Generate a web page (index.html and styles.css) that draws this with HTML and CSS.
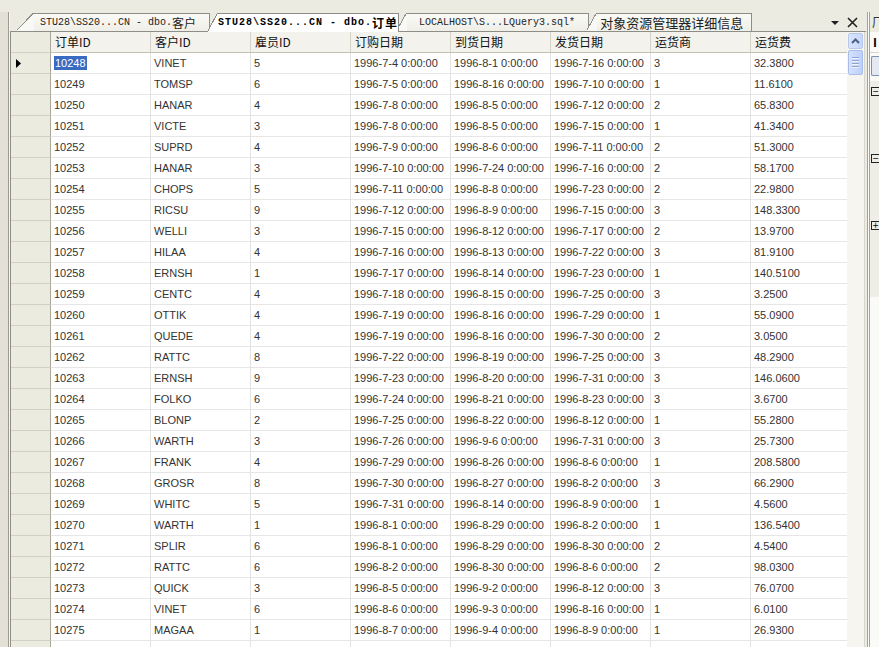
FILE: index.html
```html
<!DOCTYPE html>
<html lang="zh">
<head>
  <meta charset="UTF-8">
  <title>dbo.订单</title>
  <link rel="stylesheet" href="styles.css">
</head>
<body>
  <div class="top-strip"></div>

  <div class="workspace">
    <div class="left-pane"></div>

    <div class="doc">
      <!-- document tabs -->
      <div class="tabbar">
        <div class="tab first">STU28\SS20...CN - dbo.<span class="cjk">客户</span></div>
        <div class="tab active">STU28\SS20...CN - dbo.<span class="cjk">订单</span></div>
        <div class="tab third">LOCALHOST\S...LQuery3.sql*</div>
        <div class="tab fourth"><span class="cjk">对象资源管理器详细信息</span></div>
        <div class="tab-tools">
          <span class="drop-arrow"></span>
          <svg class="close-x" width="11" height="11" viewBox="0 0 11 11">
            <path d="M1 1 L10 10 M10 1 L1 10" stroke="#222" stroke-width="1.6"/>
          </svg>
        </div>
      </div>

      <div class="grid-area">
        <div class="grid">
          <div class="row head">
            <div class="cell rh"></div>
            <div class="cell">订单ID</div>
            <div class="cell">客户ID</div>
            <div class="cell">雇员ID</div>
            <div class="cell">订购日期</div>
            <div class="cell">到货日期</div>
            <div class="cell">发货日期</div>
            <div class="cell">运货商</div>
            <div class="cell">运货费</div>
          </div>

          <div class="row">
            <div class="cell rh"><svg width="6" height="9" viewBox="0 0 6 9"><path d="M0 0 L5 4.5 L0 9 Z" fill="#000"/></svg></div>
            <div class="cell"><span class="sel">10248</span></div><div class="cell">VINET</div><div class="cell">5</div>
            <div class="cell">1996-7-4 0:00:00</div><div class="cell">1996-8-1 0:00:00</div><div class="cell">1996-7-16 0:00:00</div>
            <div class="cell">3</div><div class="cell">32.3800</div>
          </div>
          <div class="row">
            <div class="cell rh"></div>
            <div class="cell">10249</div><div class="cell">TOMSP</div><div class="cell">6</div>
            <div class="cell">1996-7-5 0:00:00</div><div class="cell">1996-8-16 0:00:00</div><div class="cell">1996-7-10 0:00:00</div>
            <div class="cell">1</div><div class="cell">11.6100</div>
          </div>
          <div class="row">
            <div class="cell rh"></div>
            <div class="cell">10250</div><div class="cell">HANAR</div><div class="cell">4</div>
            <div class="cell">1996-7-8 0:00:00</div><div class="cell">1996-8-5 0:00:00</div><div class="cell">1996-7-12 0:00:00</div>
            <div class="cell">2</div><div class="cell">65.8300</div>
          </div>
          <div class="row">
            <div class="cell rh"></div>
            <div class="cell">10251</div><div class="cell">VICTE</div><div class="cell">3</div>
            <div class="cell">1996-7-8 0:00:00</div><div class="cell">1996-8-5 0:00:00</div><div class="cell">1996-7-15 0:00:00</div>
            <div class="cell">1</div><div class="cell">41.3400</div>
          </div>
          <div class="row">
            <div class="cell rh"></div>
            <div class="cell">10252</div><div class="cell">SUPRD</div><div class="cell">4</div>
            <div class="cell">1996-7-9 0:00:00</div><div class="cell">1996-8-6 0:00:00</div><div class="cell">1996-7-11 0:00:00</div>
            <div class="cell">2</div><div class="cell">51.3000</div>
          </div>
          <div class="row">
            <div class="cell rh"></div>
            <div class="cell">10253</div><div class="cell">HANAR</div><div class="cell">3</div>
            <div class="cell">1996-7-10 0:00:00</div><div class="cell">1996-7-24 0:00:00</div><div class="cell">1996-7-16 0:00:00</div>
            <div class="cell">2</div><div class="cell">58.1700</div>
          </div>
          <div class="row">
            <div class="cell rh"></div>
            <div class="cell">10254</div><div class="cell">CHOPS</div><div class="cell">5</div>
            <div class="cell">1996-7-11 0:00:00</div><div class="cell">1996-8-8 0:00:00</div><div class="cell">1996-7-23 0:00:00</div>
            <div class="cell">2</div><div class="cell">22.9800</div>
          </div>
          <div class="row">
            <div class="cell rh"></div>
            <div class="cell">10255</div><div class="cell">RICSU</div><div class="cell">9</div>
            <div class="cell">1996-7-12 0:00:00</div><div class="cell">1996-8-9 0:00:00</div><div class="cell">1996-7-15 0:00:00</div>
            <div class="cell">3</div><div class="cell">148.3300</div>
          </div>
          <div class="row">
            <div class="cell rh"></div>
            <div class="cell">10256</div><div class="cell">WELLI</div><div class="cell">3</div>
            <div class="cell">1996-7-15 0:00:00</div><div class="cell">1996-8-12 0:00:00</div><div class="cell">1996-7-17 0:00:00</div>
            <div class="cell">2</div><div class="cell">13.9700</div>
          </div>
          <div class="row">
            <div class="cell rh"></div>
            <div class="cell">10257</div><div class="cell">HILAA</div><div class="cell">4</div>
            <div class="cell">1996-7-16 0:00:00</div><div class="cell">1996-8-13 0:00:00</div><div class="cell">1996-7-22 0:00:00</div>
            <div class="cell">3</div><div class="cell">81.9100</div>
          </div>
          <div class="row">
            <div class="cell rh"></div>
            <div class="cell">10258</div><div class="cell">ERNSH</div><div class="cell">1</div>
            <div class="cell">1996-7-17 0:00:00</div><div class="cell">1996-8-14 0:00:00</div><div class="cell">1996-7-23 0:00:00</div>
            <div class="cell">1</div><div class="cell">140.5100</div>
          </div>
          <div class="row">
            <div class="cell rh"></div>
            <div class="cell">10259</div><div class="cell">CENTC</div><div class="cell">4</div>
            <div class="cell">1996-7-18 0:00:00</div><div class="cell">1996-8-15 0:00:00</div><div class="cell">1996-7-25 0:00:00</div>
            <div class="cell">3</div><div class="cell">3.2500</div>
          </div>
          <div class="row">
            <div class="cell rh"></div>
            <div class="cell">10260</div><div class="cell">OTTIK</div><div class="cell">4</div>
            <div class="cell">1996-7-19 0:00:00</div><div class="cell">1996-8-16 0:00:00</div><div class="cell">1996-7-29 0:00:00</div>
            <div class="cell">1</div><div class="cell">55.0900</div>
          </div>
          <div class="row">
            <div class="cell rh"></div>
            <div class="cell">10261</div><div class="cell">QUEDE</div><div class="cell">4</div>
            <div class="cell">1996-7-19 0:00:00</div><div class="cell">1996-8-16 0:00:00</div><div class="cell">1996-7-30 0:00:00</div>
            <div class="cell">2</div><div class="cell">3.0500</div>
          </div>
          <div class="row">
            <div class="cell rh"></div>
            <div class="cell">10262</div><div class="cell">RATTC</div><div class="cell">8</div>
            <div class="cell">1996-7-22 0:00:00</div><div class="cell">1996-8-19 0:00:00</div><div class="cell">1996-7-25 0:00:00</div>
            <div class="cell">3</div><div class="cell">48.2900</div>
          </div>
          <div class="row">
            <div class="cell rh"></div>
            <div class="cell">10263</div><div class="cell">ERNSH</div><div class="cell">9</div>
            <div class="cell">1996-7-23 0:00:00</div><div class="cell">1996-8-20 0:00:00</div><div class="cell">1996-7-31 0:00:00</div>
            <div class="cell">3</div><div class="cell">146.0600</div>
          </div>
          <div class="row">
            <div class="cell rh"></div>
            <div class="cell">10264</div><div class="cell">FOLKO</div><div class="cell">6</div>
            <div class="cell">1996-7-24 0:00:00</div><div class="cell">1996-8-21 0:00:00</div><div class="cell">1996-8-23 0:00:00</div>
            <div class="cell">3</div><div class="cell">3.6700</div>
          </div>
          <div class="row">
            <div class="cell rh"></div>
            <div class="cell">10265</div><div class="cell">BLONP</div><div class="cell">2</div>
            <div class="cell">1996-7-25 0:00:00</div><div class="cell">1996-8-22 0:00:00</div><div class="cell">1996-8-12 0:00:00</div>
            <div class="cell">1</div><div class="cell">55.2800</div>
          </div>
          <div class="row">
            <div class="cell rh"></div>
            <div class="cell">10266</div><div class="cell">WARTH</div><div class="cell">3</div>
            <div class="cell">1996-7-26 0:00:00</div><div class="cell">1996-9-6 0:00:00</div><div class="cell">1996-7-31 0:00:00</div>
            <div class="cell">3</div><div class="cell">25.7300</div>
          </div>
          <div class="row">
            <div class="cell rh"></div>
            <div class="cell">10267</div><div class="cell">FRANK</div><div class="cell">4</div>
            <div class="cell">1996-7-29 0:00:00</div><div class="cell">1996-8-26 0:00:00</div><div class="cell">1996-8-6 0:00:00</div>
            <div class="cell">1</div><div class="cell">208.5800</div>
          </div>
          <div class="row">
            <div class="cell rh"></div>
            <div class="cell">10268</div><div class="cell">GROSR</div><div class="cell">8</div>
            <div class="cell">1996-7-30 0:00:00</div><div class="cell">1996-8-27 0:00:00</div><div class="cell">1996-8-2 0:00:00</div>
            <div class="cell">3</div><div class="cell">66.2900</div>
          </div>
          <div class="row">
            <div class="cell rh"></div>
            <div class="cell">10269</div><div class="cell">WHITC</div><div class="cell">5</div>
            <div class="cell">1996-7-31 0:00:00</div><div class="cell">1996-8-14 0:00:00</div><div class="cell">1996-8-9 0:00:00</div>
            <div class="cell">1</div><div class="cell">4.5600</div>
          </div>
          <div class="row">
            <div class="cell rh"></div>
            <div class="cell">10270</div><div class="cell">WARTH</div><div class="cell">1</div>
            <div class="cell">1996-8-1 0:00:00</div><div class="cell">1996-8-29 0:00:00</div><div class="cell">1996-8-2 0:00:00</div>
            <div class="cell">1</div><div class="cell">136.5400</div>
          </div>
          <div class="row">
            <div class="cell rh"></div>
            <div class="cell">10271</div><div class="cell">SPLIR</div><div class="cell">6</div>
            <div class="cell">1996-8-1 0:00:00</div><div class="cell">1996-8-29 0:00:00</div><div class="cell">1996-8-30 0:00:00</div>
            <div class="cell">2</div><div class="cell">4.5400</div>
          </div>
          <div class="row">
            <div class="cell rh"></div>
            <div class="cell">10272</div><div class="cell">RATTC</div><div class="cell">6</div>
            <div class="cell">1996-8-2 0:00:00</div><div class="cell">1996-8-30 0:00:00</div><div class="cell">1996-8-6 0:00:00</div>
            <div class="cell">2</div><div class="cell">98.0300</div>
          </div>
          <div class="row">
            <div class="cell rh"></div>
            <div class="cell">10273</div><div class="cell">QUICK</div><div class="cell">3</div>
            <div class="cell">1996-8-5 0:00:00</div><div class="cell">1996-9-2 0:00:00</div><div class="cell">1996-8-12 0:00:00</div>
            <div class="cell">3</div><div class="cell">76.0700</div>
          </div>
          <div class="row">
            <div class="cell rh"></div>
            <div class="cell">10274</div><div class="cell">VINET</div><div class="cell">6</div>
            <div class="cell">1996-8-6 0:00:00</div><div class="cell">1996-9-3 0:00:00</div><div class="cell">1996-8-16 0:00:00</div>
            <div class="cell">1</div><div class="cell">6.0100</div>
          </div>
          <div class="row">
            <div class="cell rh"></div>
            <div class="cell">10275</div><div class="cell">MAGAA</div><div class="cell">1</div>
            <div class="cell">1996-8-7 0:00:00</div><div class="cell">1996-9-4 0:00:00</div><div class="cell">1996-8-9 0:00:00</div>
            <div class="cell">1</div><div class="cell">26.9300</div>
          </div>
          <div class="row">
            <div class="cell rh"></div>
            <div class="cell"></div><div class="cell"></div><div class="cell"></div>
            <div class="cell"></div><div class="cell"></div><div class="cell"></div>
            <div class="cell"></div><div class="cell"></div>
          </div>
        </div>

        <!-- vertical scrollbar -->
        <div class="vscroll">
          <div class="sb-btn">
            <svg width="9" height="6" viewBox="0 0 9 6"><path d="M1 5 L4.5 1.5 L8 5" fill="none" stroke="#4d6185" stroke-width="2"/></svg>
          </div>
          <div class="sb-thumb">
            <span></span><span></span><span></span><span></span>
          </div>
        </div>
      </div>
    </div>

    <div class="right-pane">
      <div class="rp-head">厂</div>
      <div class="rp-bar">I</div>
      <div class="rp-icons"><span></span></div>
      <div class="rp-tree">
        <span class="box">−</span>
        <span class="box">−</span>
        <span class="box">+</span>
      </div>
    </div>
  </div>
</body>
</html>
```

FILE: styles.css
```css
body{
  margin: 0;
  width: 879px;
  height: 647px;
  overflow: hidden;
  background-color: #ecebe2;
  font-family: "Liberation Sans", Arial, sans-serif;
}

.top-strip{
  height: 12px;
  background-color: #ecebe2;
}

.workspace{
  display: flex;
  height: 635px;
}

.left-pane{
  flex: none;
  width: 8px;
  background-color: #e3e1d6;
  border-right: 1px solid #9d9b90;
}

/* ---------- document ---------- */

.doc{
  flex: none;
  width: 856px;
  display: flex;
  flex-direction: column;
  border-left: 1px solid #f7f6f0;
}

.tabbar{
  height: 19px;
  display: flex;
  align-items: flex-end;
  padding-left: 15px;
  background-color: #ecebe2;
  border-bottom: 1px solid #8e8e88;
  font-family: "Liberation Mono", "DejaVu Sans Mono", monospace;
  font-size: 10px;
  color: #222;
}

.cjk{
  font-family: "Noto Sans CJK SC", sans-serif;
  font-size: 12px;
}

.tab{
  height: 18px;
  display: flex;
  align-items: center;
  box-sizing: border-box;
  margin-left: -2px;
  padding-left: 20px;
  white-space: nowrap;
  border-right: 1px solid #8e8e88;
  background:
    linear-gradient(to bottom right, transparent calc(50% - 1px), #8e8e88 calc(50% - 1px), #8e8e88 50%, #f8f8f4 50%) 0 0 / 10px 100% no-repeat,
    linear-gradient(#8e8e88, #8e8e88) 10px 0 / 100% 1px no-repeat,
    linear-gradient(#fbfbf8, #efeee7) 10px 0 / 100% 100% no-repeat;
}

.tab.first{
  margin-left: -8px;
  padding-left: 23px;
  padding-right: 13px;
  background:
    linear-gradient(to bottom right, transparent calc(50% - 1px), #8e8e88 calc(50% - 1px), #8e8e88 50%, #f8f8f4 50%) 0 0 / 17px 100% no-repeat,
    linear-gradient(#8e8e88, #8e8e88) 17px 0 / 100% 1px no-repeat,
    linear-gradient(#fbfbf8, #efeee7) 17px 0 / 100% 100% no-repeat;
}

.tab.active{
  z-index: 2;
  height: 19px;
  margin-bottom: -1px;
  padding-left: 10px;
  padding-right: 0;
  font-weight: bold;
  letter-spacing: 1px;
  color: #000;
  background:
    linear-gradient(to bottom right, transparent calc(50% - 1px), #8e8e88 calc(50% - 1px), #8e8e88 50%, #fff 50%) 0 0 / 10px 100% no-repeat,
    linear-gradient(#8e8e88, #8e8e88) 10px 0 / 100% 1px no-repeat,
    linear-gradient(#fff, #fff) 10px 0 / 100% 100% no-repeat;
}

.tab.third{
  padding-left: 22px;
  padding-right: 13px;
}

.tab.fourth{
  padding-left: 13px;
  padding-right: 8px;
}

.tab.fourth .cjk{
  font-size: 13px;
}

.tab-tools{
  margin-left: auto;
  height: 18px;
  display: flex;
  align-items: center;
  gap: 8px;
  padding-right: 8px;
}

.drop-arrow{
  width: 0;
  height: 0;
  border-left: 4px solid transparent;
  border-right: 4px solid transparent;
  border-top: 4px solid #222;
  margin-top: 2px;
}

/* ---------- grid ---------- */

.grid-area{
  flex: 1;
  display: flex;
  overflow: hidden;
  border-left: 1px solid #8e8e88;
}

.grid{
  flex: none;
  width: 836px;
  background-color: #fff;
  font-size: 11px;
  color: #333;
}

.row{
  display: grid;
  grid-template-columns: 40px repeat(7, 100px) 96px;
  height: 21px;
}

.cell{
  box-sizing: border-box;
  border-right: 1px solid #e2e2e2;
  border-bottom: 1px solid #e6e6e6;
  padding-left: 3px;
  line-height: 20px;
  white-space: nowrap;
  overflow: hidden;
}

.row .cell:last-child{
  border-right: none;
}

.head .cell{
  background-color: #f3f2ec;
  border-right: 1px solid #d5d3c8;
  border-bottom: 1px solid #c4c1b2;
  font-family: "Noto Sans CJK SC", sans-serif;
  font-size: 12px;
  color: #111;
  padding-left: 4px;
}

.cell.rh{
  background-color: #ecebdf;
  border-right: 1px solid #a9a79c;
  border-bottom: 1px solid #d2d0c4;
  display: flex;
  align-items: center;
  padding-left: 5px;
}

.head .cell.rh{
  background-color: #ecebdf;
  border-right: 1px solid #a9a79c;
}

.sel{
  background-color: #3a6bc3;
  color: #fff;
  padding: 1px 1px;
}

/* ---------- scrollbar ---------- */

.vscroll{
  flex: none;
  width: 17px;
  background-color: #f6f5f0;
  border-right: 1px solid #d8d6cc;
  display: flex;
  flex-direction: column;
  align-items: center;
  padding-top: 1px;
  gap: 1px;
}

.sb-btn{
  width: 15px;
  height: 16px;
  box-sizing: border-box;
  border: 1px solid #b7c8f0;
  border-radius: 2px;
  background: linear-gradient(to right, #dbe6fd, #c6d6fc);
  display: flex;
  align-items: center;
  justify-content: center;
}

.sb-thumb{
  width: 15px;
  height: 25px;
  box-sizing: border-box;
  border: 1px solid #a9bdec;
  border-radius: 2px;
  background: linear-gradient(to right, #d6e2fd, #bdd0fa);
  display: flex;
  flex-direction: column;
  align-items: center;
  justify-content: center;
  gap: 1px;
}

.sb-thumb span{
  width: 7px;
  height: 1px;
  background-color: #8aa3d8;
  border-bottom: 1px solid #eef3ff;
}

/* ---------- right pane ---------- */

.right-pane{
  flex: 1;
  min-width: 0;
  overflow: hidden;
  display: flex;
  flex-direction: column;
  border-left: 3px double #a4a29a;
  margin-left: 1px;
  background-color: #fafaf7;
  font-family: "Noto Sans CJK SC", sans-serif;
  font-size: 12px;
}

.rp-head{
  height: 20px;
  line-height: 20px;
  padding-left: 2px;
  background-color: #ecebe2;
  color: #333;
}

.rp-bar{
  height: 20px;
  line-height: 20px;
  padding-left: 3px;
  font-weight: bold;
  color: #000;
  border-bottom: 1px solid #d8d6cc;
}

.rp-icons{
  height: 28px;
  padding: 3px 0 0 1px;
  box-sizing: border-box;
}

.rp-icons span{
  display: block;
  width: 8px;
  height: 18px;
  border: 1px solid #7f8fae;
  border-right: none;
  border-radius: 2px 0 0 2px;
  background-color: #e4e9f4;
}

.rp-tree{
  height: 210px;
  background-color: #efeee6;
  display: flex;
  flex-direction: column;
  padding: 6px 0 0 1px;
  gap: 58px;
}

.box{
  flex: none;
  width: 7px;
  height: 7px;
  border: 1px solid #222;
  font-size: 8px;
  line-height: 7px;
  text-align: center;
  color: #000;
  font-family: "DejaVu Sans", sans-serif;
}
```
